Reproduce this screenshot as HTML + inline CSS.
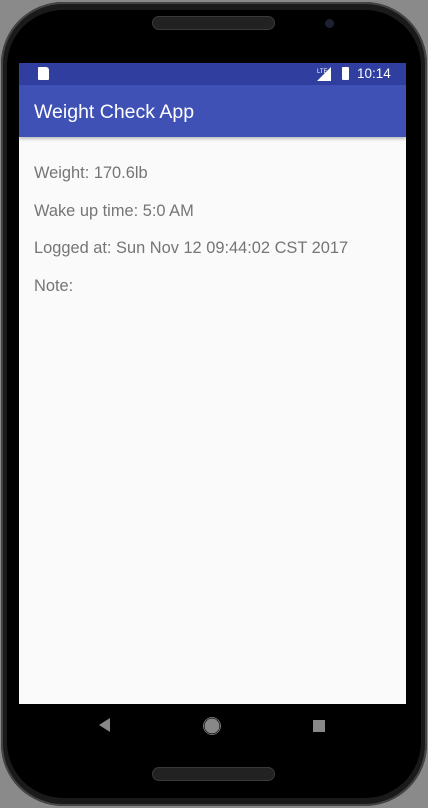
<!DOCTYPE html>
<html><head><style>
body{margin:0;width:428px;height:808px;background:#8a8a8a;position:relative;overflow:hidden;font-family:"Liberation Sans",sans-serif}
.phone{position:absolute;left:1px;top:2px;width:426px;height:804px;background:#1a1a1a;border-radius:62px;box-shadow:inset 0 0 0 2px #444}
.inner{position:absolute;left:6px;top:8px;width:414px;height:788px;background:#000;border-radius:56px}
.spk{position:absolute;left:152px;width:123px;height:14px;border-radius:8px;background:#222;border:1px solid #3a3a3a;box-sizing:border-box}
.screen{position:absolute;left:19px;top:63px;width:387px;height:641px;background:#fafafa}
.sb{height:22px;background:#303f9f;color:#fff;position:relative}
.ab{height:52px;background:#3f51b5;color:#fff;font-size:19.5px;line-height:54px;padding-left:15px;box-shadow:0 2px 3px rgba(0,0,0,.25);position:relative}
.t{position:absolute;left:15px;color:#757575;font-size:16.4px}
</style></head><body>
<div class="phone"><div class="inner"></div></div>
<div class="spk" style="top:16px"></div>
<div class="spk" style="top:767px"></div>
<div style="position:absolute;left:325px;top:19px;width:9px;height:9px;border-radius:50%;background:#1c2130"></div>
<div class="screen">
<div class="sb">
<div style="position:absolute;left:19px;top:4px;width:11px;height:13px;background:#fff;border-radius:1px 3px 1px 1px"></div>
<svg style="position:absolute;left:298px;top:4px" width="14" height="14"><polygon points="14,0 14,14 0,14" fill="#fff"/><text x="0" y="6" font-size="6" fill="#fff" font-family="Liberation Sans">LTE</text></svg>
<div style="position:absolute;left:323px;top:4px;width:7px;height:13px;background:#fff;border-radius:1px"></div>
<div style="position:absolute;left:338px;top:3px;font-size:13.5px">10:14</div>
</div>
<div class="ab">Weight Check App</div>
<div class="t" style="top:101px">Weight: 170.6lb</div>
<div class="t" style="top:139px">Wake up time: 5:0 AM</div>
<div class="t" style="top:176px">Logged at: Sun Nov 12 09:44:02 CST 2017</div>
<div class="t" style="top:214px">Note:</div>
</div>
<svg style="position:absolute;left:0;top:704px" width="428" height="50">
<polygon points="110,14 110,28 99,21" fill="#888"/>
<circle cx="212" cy="22" r="8" fill="#888" stroke="#000" stroke-width="1"/>
<circle cx="212" cy="22" r="8.5" fill="none" stroke="#888" stroke-width="0.8"/>
<rect x="313" y="16" width="12" height="12" fill="#888"/>
</svg>
</body></html>
